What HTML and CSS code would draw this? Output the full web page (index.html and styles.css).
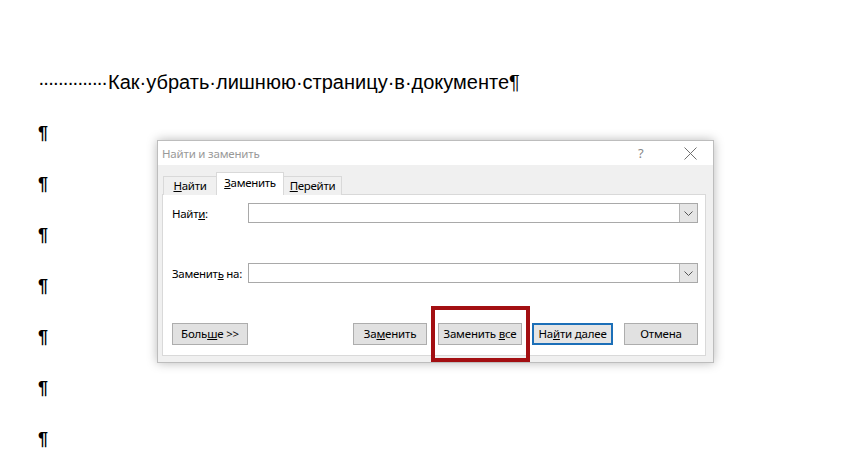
FILE: index.html
```html
<!DOCTYPE html>
<html lang="ru">
<head>
<meta charset="utf-8">
<title>Найти и заменить</title>
<link rel="stylesheet" href="styles.css">
</head>
<body>
<div class="page">
  <p class="line"><span class="dots">··············</span>Как·убрать·лишнюю·страницу·в·документе¶</p>
  <p class="line pil">¶</p>
  <p class="line pil">¶</p>
  <p class="line pil">¶</p>
  <p class="line pil">¶</p>
  <p class="line pil">¶</p>
  <p class="line pil">¶</p>
  <p class="line pil">¶</p>
</div>

<div class="dialog">
  <div class="titlebar">
    <span class="title">Найти и заменить</span>
    <span class="help">?</span>
    <span class="close">
      <svg width="13" height="13" viewBox="0 0 13 13"><path d="M0.5 0.5 L12.5 12.5 M12.5 0.5 L0.5 12.5" stroke="#6f6f6f" stroke-width="1" fill="none"/></svg>
    </span>
  </div>
  <div class="body">
    <div class="tabs">
      <div class="tab t1"><u>Н</u>айти</div>
      <div class="tab t2 active"><u>З</u>аменить</div>
      <div class="tab t3"><u>П</u>ерейти</div>
    </div>
    <div class="panel">
      <div class="row">
        <label class="lbl">Найт<u>и</u>:</label>
        <div class="combo"><span class="drop"><svg width="9" height="5" viewBox="0 0 9 5"><path d="M0.5 0.5 L4.5 4.5 L8.5 0.5" stroke="#555" stroke-width="1" fill="none"/></svg></span></div>
      </div>
      <div class="row row2">
        <label class="lbl">Заменит<u>ь</u> на:</label>
        <div class="combo"><span class="drop"><svg width="9" height="5" viewBox="0 0 9 5"><path d="M0.5 0.5 L4.5 4.5 L8.5 0.5" stroke="#555" stroke-width="1" fill="none"/></svg></span></div>
      </div>
      <div class="buttons">
        <button class="btn b-more">Боль<u>ш</u>е &gt;&gt;</button>
        <span class="spacer"></span>
        <button class="btn b-repl">За<u>м</u>енить</button>
        <button class="btn b-all">Заменить <u>в</u>се</button>
        <button class="btn b-next">На<u>й</u>ти далее</button>
        <button class="btn b-cancel">Отмена</button>
      </div>
    </div>
  </div>
</div>

<div class="highlight"></div>
</body>
</html>
```

FILE: styles.css
```css
* { box-sizing: border-box; margin: 0; padding: 0; }
html, body { background: #fff; }
body {
  width: 848px;
  height: 468px;
  overflow: hidden;
  position: relative;
  font-family: "Liberation Sans", Arial, sans-serif;
}

.page { padding: 57px 0 0 38px; }
.line {
  height: 51px;
  line-height: 51px;
  font-size: 20px;
  color: #000;
  white-space: nowrap;
}
.dots { letter-spacing: -1.8px; margin-right: 2px; }
.pil { font-size: 18px; font-weight: bold; }

.dialog {
  position: absolute;
  left: 157px;
  top: 140px;
  width: 557px;
  height: 223px;
  background: #f0f0f0;
  border: 1px solid #bdbdbd;
  box-shadow: 0 0 10px rgba(0, 0, 0, 0.28);
  font-family: "Noto Sans", "Liberation Sans", sans-serif;
  font-size: 11.5px;
  letter-spacing: -0.3px;
  color: #000;
  display: flex;
  flex-direction: column;
}
.titlebar {
  height: 24px;
  background: #fff;
  display: flex;
  align-items: center;
  padding-left: 4px;
  color: #999;
  font-size: 11.5px;
  letter-spacing: -0.2px;
}
.title { flex: 1; }
.help {
  width: 12px;
  font-size: 13px;
  color: #888;
  margin-right: 34px;
}
.close { width: 13px; height: 13px; margin-right: 16px; display: flex; }

.body {
  flex: 1;
  padding: 8px 7px 6px 4px;
  display: flex;
  flex-direction: column;
}
.tabs {
  height: 22px;
  display: flex;
  align-items: flex-end;
  padding-left: 1px;
  margin-bottom: -1px;
  position: relative;
  z-index: 1;
}
.tab {
  height: 19px;
  border: 1px solid #d9d9d9;
  border-bottom: none;
  background: #f0f0f0;
  display: flex;
  align-items: center;
  justify-content: center;
  line-height: 1;
}
.tab.active {
  height: 23px;
  background: #fff;
  padding-bottom: 3px;
}
.t1 { width: 53px; border-right: none; }
.t2 { width: 68px; }
.t3 { width: 58px; border-left: none; }

.panel {
  flex: 1;
  background: #fff;
  border: 1px solid #d9d9d9;
  padding: 8px 7px 8px 9px;
  display: flex;
  flex-direction: column;
}
.row {
  height: 20px;
  display: flex;
  align-items: center;
}
.row2 { margin-top: 40px; }
.lbl { width: 76px; white-space: nowrap; }
.combo {
  flex: 1;
  height: 20px;
  border: 1px solid #a9a9a9;
  display: flex;
  justify-content: flex-end;
}
.drop {
  width: 18px;
  height: 18px;
  background: #e5e5e5;
  border-left: 1px solid #b5b5b5;
  display: flex;
  align-items: center;
  justify-content: center;
}

.buttons {
  margin-top: 40px;
  height: 22px;
  display: flex;
}
.spacer { flex: 1; }
.btn {
  height: 22px;
  font-family: inherit;
  font-size: 11.5px;
  letter-spacing: -0.2px;
  color: #000;
  background: #e1e1e1;
  border: 1px solid #adadad;
  line-height: 1;
  white-space: nowrap;
}
.b-more { width: 76px; }
.b-repl { width: 74px; margin-right: 11px; }
.b-all { width: 84px; margin-right: 10px; }
.b-next { width: 81px; margin-right: 11px; border: 2px solid #1c6fb8; background: #e5e5e5; }
.b-cancel { width: 74px; }

.highlight {
  position: absolute;
  left: 431px;
  top: 306px;
  width: 99px;
  height: 56px;
  border: 4px solid #a30f12;
}
```
